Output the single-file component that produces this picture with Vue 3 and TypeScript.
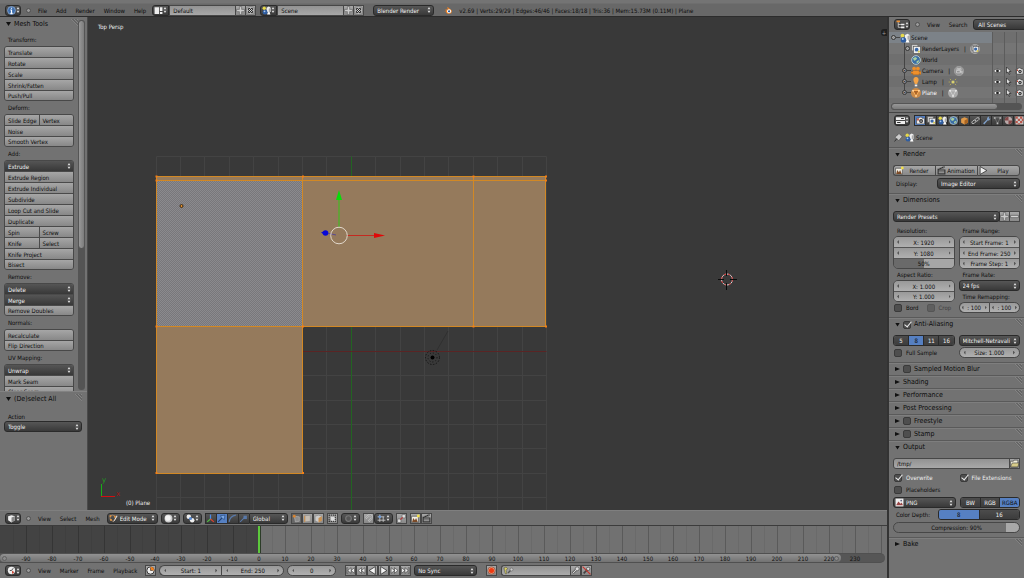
<script setup lang="ts">
import { ref } from 'vue'

interface Tool { label: string; menu?: boolean; half?: string }
interface ToolGroup { title: string; rows: Tool[] }

const toolGroups: ToolGroup[] = [
  { title: 'Transform:', rows: [{ label: 'Translate' }, { label: 'Rotate' }, { label: 'Scale' }, { label: 'Shrink/Fatten' }, { label: 'Push/Pull' }] },
  { title: 'Deform:', rows: [{ label: 'Slide Edge', half: 'Vertex' }, { label: 'Noise' }, { label: 'Smooth Vertex' }] },
  {
    title: 'Add:',
    rows: [
      { label: 'Extrude', menu: true }, { label: 'Extrude Region' }, { label: 'Extrude Individual' }, { label: 'Subdivide' },
      { label: 'Loop Cut and Slide' }, { label: 'Duplicate' }, { label: 'Spin', half: 'Screw' }, { label: 'Knife', half: 'Select' },
      { label: 'Knife Project' }, { label: 'Bisect' },
    ],
  },
  { title: 'Remove:', rows: [{ label: 'Delete', menu: true }, { label: 'Merge', menu: true }, { label: 'Remove Doubles' }] },
  { title: 'Normals:', rows: [{ label: 'Recalculate' }, { label: 'Flip Direction' }] },
  { title: 'UV Mapping:', rows: [{ label: 'Unwrap', menu: true }, { label: 'Mark Seam' }, { label: 'Clear Seam' }] },
]

const tree = [
  { name: 'RenderLayers', icon: 'layers', extra: 'layersdisc', expand: '-', restrict: false },
  { name: 'World', icon: 'world', extra: '', expand: '', restrict: false },
  { name: 'Camera', icon: 'camobj', extra: 'camdata', expand: '+', restrict: true },
  { name: 'Lamp', icon: 'lamp', extra: 'lampdata', expand: '+', restrict: true },
  { name: 'Plane', icon: 'mesh', extra: 'meshdata', expand: '+', restrict: true },
]

const tabs = ['camera', 'layers', 'scene', 'world', 'cube', 'chain', 'wrench', 'tri', 'material', 'texture']

const folded = ref([
  { title: 'Sampled Motion Blur', check: true },
  { title: 'Shading', check: false },
  { title: 'Performance', check: false },
  { title: 'Post Processing', check: false },
  { title: 'Freestyle', check: true },
  { title: 'Stamp', check: true },
])

const playback = ['first', 'prevkey', 'reverse', 'play', 'nextkey', 'last']

/* Ground grid: 16 cells round the world origin */
const CELL = 24.4
const GRID = 156.5
const gridSteps = Array.from({ length: 17 }, (_, i) => Math.floor(i * CELL) + GRID)
const gridEnd = gridSteps[16]
const axis = gridSteps[8]
const verts: [number, number][] = [
  [156.5, 177], [303, 177], [473.5, 177], [546, 177],
  [156.5, 181], [546, 181],
  [156.5, 327], [303, 327], [473.5, 327], [546, 327],
  [156.5, 473.5], [303, 473.5],
]

/* Timeline ruler */
const ZERO = 259
const frameX = (frame: number) => Math.round(ZERO + frame * 2.59)
const frames = Array.from({ length: 33 }, (_, i) => -90 + i * 10)
const ticks = Array.from({ length: 68 }, (_, i) => -95 + i * 5)
</script>

<template>
  <svg class="defs" aria-hidden="true">
    <symbol id="updown" viewBox="0 0 6 10"><path d="M3 0.5 5.2 4H0.8zM3 9.5 5.2 6H0.8z" fill="currentColor" /></symbol>
    <symbol id="plus" viewBox="0 0 16 16"><path d="M6 1h4v5h5v4h-5v5H6v-5H1V6h5z" fill="#ccc" stroke="#555" /></symbol>
    <symbol id="minus" viewBox="0 0 16 16"><path d="M1 6h14v4H1z" fill="#d4d4d4" stroke="#444" /></symbol>
    <symbol id="cross" viewBox="0 0 16 16"><rect x="1" y="1" width="14" height="14" rx="4" fill="#bbb" stroke="#666" /><path d="M4 4l8 8M12 4l-8 8" stroke="#222" stroke-width="3.600" /><path d="M5 5l6 6M11 5l-6 6" stroke="#ddd" stroke-width="1.600" /></symbol>
    <symbol id="info" viewBox="0 0 16 16"><circle cx="8" cy="8" r="7" fill="#3f6fae" stroke="#8aa8d0" stroke-width="1.500" /><path d="M8 3v2M8 6.5V13M6 13h4M6 7h2" stroke="#fff" stroke-width="2" /></symbol>
    <symbol id="screen" viewBox="0 0 16 16"><path d="M1 2h8v12H1zM10.500 2H15v7h-4.500zM10.500 10.500H15V14h-4.500z" fill="#eee" /></symbol>
    <symbol id="scene" viewBox="0 0 16 16"><circle cx="4" cy="4" r="3" fill="#e6d94a" /><path d="M8 3l4-2 3.500 2v7L12 12 8 10z" fill="#eee" /><path d="M12 5l3.500-2v7L12 12z" fill="#aaa" /><circle cx="5.500" cy="11" r="4.300" fill="#2f5da0" /><circle cx="4.500" cy="9.500" r="1.600" fill="#a8c8f0" /><path d="M10 12l3-2 2 5H9z" fill="#fff" /></symbol>
    <symbol id="blender" viewBox="0 0 16 16"><path d="M1 6h7L5 3l2-1 7 6-1 5-6 1-3-2L3 9 0 11l4-4z" fill="#f08020" /><circle cx="9" cy="9.500" r="3.600" fill="#fff" /><circle cx="9" cy="9.500" r="2" fill="#265a9c" /></symbol>
    <symbol id="outliner" viewBox="0 0 16 16"><path d="M1 1h6v3H1z" fill="#f09030" /><path d="M4 4v9h5M4 8h5" fill="none" stroke="#ddd" stroke-width="1.300" /><path d="M9 6.500h6v3H9zM9 11.500h6v3H9z" fill="#eee" /></symbol>
    <symbol id="props" viewBox="0 0 16 16"><path d="M0 2h16v5H0zM0 9h16v5H0z" fill="#eee" /><path d="M9 4.500h5M2 11.500h6" stroke="#333" stroke-width="2" /></symbol>
    <symbol id="cube3d" viewBox="0 0 16 16"><path d="M2 4l6-2 6 2v7l-6 4-6-4z" fill="#eee" /><path d="M8 6l6-2v7l-6 4z" fill="#888" /></symbol>
    <symbol id="clock" viewBox="0 0 16 16"><circle cx="8" cy="8" r="6.500" fill="#eee" /><path d="M8 8l3-4M8 8H5" stroke="#333" stroke-width="1.500" /><path d="M9 8l4 3-4 3z" fill="#c43" /></symbol>
    <symbol id="layers" viewBox="0 0 16 16"><rect x="1" y="1" width="10" height="10" fill="#ccc" stroke="#666" /><rect x="4" y="4" width="11" height="11" fill="#eee" stroke="#555" /><circle cx="9" cy="9" r="3" fill="#3a68a8" /><circle cx="12.500" cy="12" r="1.800" fill="#d8c850" /></symbol>
    <symbol id="layersdisc" viewBox="0 0 16 16"><circle cx="8" cy="8" r="8" fill="#aaa" /><rect x="3" y="2" width="8" height="8" fill="#ccc" stroke="#666" /><rect x="5" y="4" width="9" height="9" fill="#eee" stroke="#555" /><circle cx="9" cy="8" r="2.600" fill="#3a68a8" /><circle cx="12" cy="11" r="1.600" fill="#d8c850" /></symbol>
    <symbol id="world" viewBox="0 0 16 16"><circle cx="8" cy="8" r="7" fill="#3b6ea5" stroke="#cdd" stroke-width="1.200" /><path d="M3 5l4-2 3 2-2 3-3 1zM9 10l4-2-1 4-3 1z" fill="#a9cfa0" /></symbol>
    <symbol id="camobj" viewBox="0 0 16 16"><circle cx="5" cy="4" r="3" fill="#f0902a" /><circle cx="11" cy="4" r="3" fill="#f0902a" /><path d="M3 7h10v3l3-2v6l-3-2v2H3v-2H0V9h3z" fill="#f0902a" stroke="#a35a14" stroke-width=".6" /></symbol>
    <symbol id="camdata" viewBox="0 0 16 16"><circle cx="8" cy="8" r="7.500" fill="#949494" stroke="#aaa" /><path d="M4 7h6v4H4zM10 9l3-1v4z" fill="none" stroke="#ddd" /><circle cx="6" cy="5" r="1.500" fill="none" stroke="#ddd" /><circle cx="10" cy="5" r="1.500" fill="none" stroke="#ddd" /></symbol>
    <symbol id="lamp" viewBox="0 0 16 16"><path d="M8 0a4 4 0 0 1 4 5c0 3-2 3-2 6H6c0-3-2-3-2-6a4 4 0 0 1 4-5z" fill="#f3a347" /><path d="M6 12h4v3H6z" fill="#eee" /></symbol>
    <symbol id="lampdata" viewBox="0 0 16 16"><circle cx="8" cy="8" r="2.500" fill="#d8d070" /><path d="M3 3l2 2M13 3l-2 2M3 13l2-2M13 13l-2-2M1 8h2M13 8h2" stroke="#b5ad55" stroke-width="1.500" /></symbol>
    <symbol id="mesh" viewBox="0 0 16 16"><circle cx="8" cy="8" r="8" fill="#c98a48" /><path d="M3 4h10l-5 9z" fill="#a8652a" stroke="#ffb15a" stroke-width="1.500" /><path d="M2 3h2.500v2.500H2zM11.500 3H14v2.500h-2.500zM6.800 11.500h2.500V14H6.800z" fill="#ffd9a8" /></symbol>
    <symbol id="meshdata" viewBox="0 0 16 16"><circle cx="8" cy="8" r="8" fill="#aaa" /><path d="M3.500 4.500h9L8 12.500z" fill="none" stroke="#ddd" /><path d="M2 3h2.500v2.500H2zM11.500 3H14v2.500h-2.500zM6.800 11.500h2.500V14H6.800z" fill="#eee" /></symbol>
    <symbol id="eye" viewBox="0 0 16 16"><path d="M0 8q8-8 16 0q-8 7-16 0z" fill="#eee" stroke="#333" /><circle cx="8" cy="8" r="2.800" fill="#222" /></symbol>
    <symbol id="cursor" viewBox="0 0 16 16"><path d="M4 0v12l3-2 2 5 2-1-2-5h4z" fill="#ddd" stroke="#222" stroke-width="1.300" /></symbol>
    <symbol id="camera" viewBox="0 0 16 16"><path d="M1 4h4l1-2h4l1 2h4v10H1z" fill="#eee" stroke="#333" /><circle cx="9" cy="9" r="3.500" fill="#333" /><circle cx="9" cy="9" r="1.500" fill="#aaa" /><path d="M2 5h3v3H2z" fill="#c43" /></symbol>
    <symbol id="cube" viewBox="0 0 16 16"><path d="M2 5l6-3 6 3v7l-6 3-6-3z" fill="#e09a4a" /><path d="M8 8l6-3v7l-6 3z" fill="#a86422" /></symbol>
    <symbol id="chain" viewBox="0 0 16 16"><ellipse cx="5" cy="10.500" rx="4" ry="2.500" transform="rotate(-35 5 10.500)" fill="none" stroke="#bbb" stroke-width="1.500" /><ellipse cx="11" cy="6" rx="4" ry="2.500" transform="rotate(-35 11 6)" fill="none" stroke="#bbb" stroke-width="1.500" /></symbol>
    <symbol id="wrench" viewBox="0 0 16 16"><path d="M2 13l7-7a4 4 0 0 1 4-5l-1 3 2 1 1-1a4 4 0 0 1-5 4l-6 7z" fill="#7f9fc8" /></symbol>
    <symbol id="tri" viewBox="0 0 16 16"><path d="M3 3h10L8 13z" fill="none" stroke="#888" /><path d="M1.500 2h3v3h-3zM11.500 2h3v3h-3zM6.500 11.500h3v3h-3z" fill="#bbb" /></symbol>
    <symbol id="material" viewBox="0 0 16 16"><circle cx="8" cy="8" r="6.500" fill="#b9a9a9" /><path d="M8 8h6.500A6.500 6.500 0 0 1 8 14.500zM8 8H1.500A6.500 6.500 0 0 1 8 1.500z" fill="#834848" /></symbol>
    <symbol id="texture" viewBox="0 0 16 16"><path d="M1 1h14v14H1z" fill="#ccc" /><path d="M1 1h4v4H1zM9 1h4v4H9zM5 5h4v4H5zM1 9h4v4H1zM9 9h4v4H9zM12 5h3v4h-3zM5 13h4v2H5z" fill="#b8584c" /></symbol>
    <symbol id="pin" viewBox="0 0 16 16"><path d="M9 1l6 6-2 1-3 4-2 1-6-5 1-2 4-3z" fill="#ccc" stroke="#444" /><path d="M5 10l-4 5" stroke="#222" stroke-width="1.500" /></symbol>
    <symbol id="still" viewBox="0 0 16 16"><path d="M1 4h12v11H1z" fill="#f2efe6" stroke="#333" /><path d="M2 14l2-7 3 4 2-4 3 7z" fill="#7a4a28" /><circle cx="13" cy="3.500" r="2.500" fill="#f3e04a" /></symbol>
    <symbol id="clapper" viewBox="0 0 16 16"><path d="M1 5L13 0l1 3-9 3h10v9H1z" fill="#333" /><path d="M3 4l2 2M7 2.500l2 2M11 1l1.500 2M3 9h10M3 12h10" stroke="#ddd" stroke-width="1.300" /></symbol>
    <symbol id="playbig" viewBox="0 0 16 16"><path d="M2 1l12 7-12 7z" fill="#eee" stroke="#222" stroke-width="1.300" /></symbol>
    <symbol id="folder" viewBox="0 0 16 16"><path d="M1 4h5l1-2h7v12H1z" fill="#f4f0dc" stroke="#333" /><path d="M1 14l3-7h12l-2 7z" fill="#d8cc8a" stroke="#333" /></symbol>
    <symbol id="image" viewBox="0 0 16 16"><path d="M1 1h14v14H1z" fill="#eee" /><path d="M2 13l4-7 4 4 2-2 2 5z" fill="#944" /><circle cx="11" cy="4.500" r="1.500" fill="#557" /></symbol>
    <symbol id="edit" viewBox="0 0 16 16"><path d="M2 4l4-2 5 2v6l-4 3-5-3z" fill="none" stroke="#b99268" stroke-width="1.300" /><path d="M1 2h3v3H1zM9 3h3v3H9zM2 9h3v3H2z" fill="#e8963c" /><path d="M14 2l-5 9-2 3 3-2 5-8z" fill="#eee" /></symbol>
    <symbol id="solid" viewBox="0 0 16 16"><circle cx="8" cy="8" r="7" fill="#ccc" /><circle cx="7" cy="7" r="5" fill="#f4f4f4" /></symbol>
    <symbol id="pivot" viewBox="0 0 16 16"><circle cx="5" cy="5" r="4" fill="#eee" /><circle cx="11" cy="11" r="4" fill="#eee" /><circle cx="8" cy="8" r="2.800" fill="#5b8ad0" /></symbol>
    <symbol id="axes" viewBox="0 0 16 16"><path d="M8 9V1" stroke="#4a8be8" stroke-width="2.200" /><path d="M8 9l-6 5" stroke="#50c040" stroke-width="2.200" /><path d="M8 9l6 5" stroke="#e04030" stroke-width="2.200" /></symbol>
    <symbol id="move" viewBox="0 0 16 16"><path d="M2 14l7-7" stroke="#1d3f70" stroke-width="2" /><path d="M6 3l8-1-1 8-3-2-2-2z" fill="#7ca6e0" stroke="#1d3f70" /></symbol>
    <symbol id="arc" viewBox="0 0 16 16"><path d="M2 14C3 7 7 3 14 2" fill="none" stroke="#5878a8" stroke-width="2.200" /></symbol>
    <symbol id="scaleh" viewBox="0 0 16 16"><path d="M2 14l8-8" stroke="#5878a8" stroke-width="1.800" /><path d="M8 3h6v6H8z" fill="#5878a8" /></symbol>
    <symbol id="vert" viewBox="0 0 16 16"><path d="M4 4l9 1v8l-7 1z" fill="#8c8c8c" stroke="#bbb" /><circle cx="4" cy="4" r="2.500" fill="#d88430" /></symbol>
    <symbol id="edge" viewBox="0 0 16 16"><path d="M3 3l10-1v11l-10 1z" fill="#c4bdb4" stroke="#888" /><path d="M3 3v11" stroke="#c99050" stroke-width="2" /></symbol>
    <symbol id="face" viewBox="0 0 16 16"><path d="M2 4l6-2 6 2v8l-6 3-6-3z" fill="#ccc" stroke="#888" /><path d="M8 7l6-3v8l-6 3z" fill="#c99050" /></symbol>
    <symbol id="occlude" viewBox="0 0 16 16"><path d="M5 5h8v8H5z" fill="#ddd" /><path d="M2 2h11v11H2z" fill="none" stroke="#333" stroke-dasharray="2 1.500" stroke-width="2" /></symbol>
    <symbol id="ring" viewBox="0 0 16 16"><circle cx="8" cy="8" r="5" fill="#555" stroke="#777" stroke-width="2" /></symbol>
    <symbol id="magnet" viewBox="0 0 16 16"><path d="M3 8l5-5a3.500 3.500 0 0 1 5 5l-5 5" fill="none" stroke="#ccc" stroke-width="3" /><path d="M3 8l5-5a3.500 3.500 0 0 1 5 5l-5 5" fill="none" stroke="#666" /></symbol>
    <symbol id="snapgrid" viewBox="0 0 16 16"><path d="M5 1v13M11 5v9M1 5h12M1 11h14" stroke="#ccc" stroke-width="1.500" /><circle cx="5" cy="5" r="2.500" fill="#6d9ad8" /></symbol>
    <symbol id="link" viewBox="0 0 16 16"><path d="M9 1h6v6H9zM1 9h6v6H1z" fill="#ddd" stroke="#555" /><path d="M6 10l4-4" stroke="#b33" stroke-width="2" /></symbol>
    <symbol id="first" viewBox="0 0 16 16"><path d="M1 3h2v10H1zM9 3v10L3 8zM15 3v10L9 8z" fill="#eee" stroke="#333" /></symbol>
    <symbol id="prevkey" viewBox="0 0 16 16"><path d="M8 3v10L2 8zM14 3v10L8 8z" fill="#eee" stroke="#333" /></symbol>
    <symbol id="reverse" viewBox="0 0 16 16"><path d="M13 1v14L2 8z" fill="#f4f4f4" stroke="#222" stroke-width="1.300" /></symbol>
    <symbol id="play" viewBox="0 0 16 16"><path d="M3 1v14l11-7z" fill="#f4f4f4" stroke="#222" stroke-width="1.300" /></symbol>
    <symbol id="nextkey" viewBox="0 0 16 16"><path d="M2 3v10l6-5zM8 3v10l6-5z" fill="#eee" stroke="#333" /></symbol>
    <symbol id="last" viewBox="0 0 16 16"><path d="M1 3v10l6-5zM7 3v10l6-5zM13 3h2v10h-2z" fill="#eee" stroke="#333" /></symbol>
    <symbol id="preview" viewBox="0 0 16 16"><circle cx="8" cy="8" r="6.500" fill="#eee" stroke="#222" stroke-width="1.500" /><path d="M8 8V1.500A6.500 6.500 0 0 1 14.500 8z" fill="#f08020" /><path d="M8 3v5h4" fill="none" stroke="#222" /></symbol>
    <symbol id="record" viewBox="0 0 16 16"><circle cx="8" cy="8" r="6.500" fill="#e8a080" stroke="#804030" /><circle cx="8" cy="8" r="4.500" fill="#ee3a12" /></symbol>
    <symbol id="keyset" viewBox="0 0 24 16"><path d="M8 1l3 3-3 4 2 6-3 1-2-7-1-5z" fill="#d8cf62" stroke="#444" /><path d="M12 13l6-6" stroke="#555" stroke-width="3" /><circle cx="19" cy="6" r="3" fill="#ccc" stroke="#555" /></symbol>
    <symbol id="key" viewBox="0 0 16 16"><path d="M3 13l7-7" stroke="#333" stroke-width="4" /><circle cx="11" cy="5" r="3.500" fill="#ddd" stroke="#333" /><path d="M3 13l7-7" stroke="#ddd" stroke-width="2" /></symbol>
    <symbol id="keydel" viewBox="0 0 16 16"><path d="M3 13l7-7" stroke="#444" stroke-width="3" /><circle cx="11" cy="5" r="3" fill="#ddd" stroke="#333" /><path d="M1 1l14 14" stroke="#c8322a" stroke-width="2" /></symbol>
  </svg>

  <div class="app">
    <header class="bar info">
      <button class="editor" aria-label="Editor type: Info"><svg class="ic"><use href="#info" /></svg><svg class="ud"><use href="#updown" /></svg></button>
      <span class="dot"></span>
      <nav class="menus">
        <a href="#file">File</a><a href="#add">Add</a><a href="#render">Render</a><a href="#window">Window</a><a href="#help">Help</a>
      </nav>
      <div class="idblock layoutid">
        <button class="editor" aria-label="Screen layout"><svg class="ic"><use href="#screen" /></svg><svg class="ud"><use href="#updown" /></svg></button>
        <input class="field" aria-label="Layout name" value="Default" />
        <button class="sq" aria-label="Add layout"><svg class="ic"><use href="#plus" /></svg></button>
        <button class="sq" aria-label="Delete layout"><svg class="ic"><use href="#cross" /></svg></button>
      </div>
      <div class="idblock sceneid">
        <button class="editor" aria-label="Scene"><svg class="ic"><use href="#scene" /></svg><svg class="ud"><use href="#updown" /></svg></button>
        <input class="field" aria-label="Scene name" value="Scene" />
        <button class="sq" aria-label="Add scene"><svg class="ic"><use href="#plus" /></svg></button>
        <button class="sq" aria-label="Delete scene"><svg class="ic"><use href="#cross" /></svg></button>
      </div>
      <label class="drop engine"><select aria-label="Render engine"><option>Blender Render</option></select><svg class="ud"><use href="#updown" /></svg></label>
      <svg class="ic logo"><use href="#blender" /></svg>
      <span class="stats">v2.69 | Verts:29/29 | Edges:46/46 | Faces:18/18 | Tris:36 | Mem:15.73M (0.11M) | Plane</span>
    </header>

    <div class="work">
      <div class="left">
        <div class="view">
          <aside class="shelf">
            <div class="tools">
              <div class="toollist">
                <h2 class="phead"><span class="tri open"></span>Mesh Tools<span class="grip"></span></h2>
                <section v-for="g in toolGroups" :key="g.title">
                  <h3>{{ g.title }}</h3>
                  <div class="stack">
                    <div v-for="t in g.rows" :key="t.label" class="trow">
                      <button :class="['btn', { dark: t.menu }]">{{ t.label }}<svg v-if="t.menu" class="ud"><use href="#updown" /></svg></button>
                      <button v-if="t.half" class="btn second">{{ t.half }}</button>
                    </div>
                  </div>
                </section>
              </div>
              <div class="vscroll"><div class="vthumb"></div></div>
            </div>
            <div class="operator">
              <h2 class="phead"><span class="tri open"></span>(De)select All<span class="grip"></span></h2>
              <label class="oplabel" for="action">Action</label>
              <div class="drop"><select id="action"><option>Toggle</option></select><svg class="ud"><use href="#updown" /></svg></div>
            </div>
          </aside>

          <div class="canvas">
            <svg class="scene3d" width="1000" height="600" viewBox="88 17 1000 600">
              <defs>
                <pattern id="sel" width="2" height="2" patternUnits="userSpaceOnUse">
                  <rect width="2" height="2" fill="#78777b" /><rect width="1" height="1" fill="#8b8a8e" /><rect x="1" y="1" width="1" height="1" fill="#8b8a8e" />
                </pattern>
              </defs>
              <g stroke="#434343">
                <template v-for="p in gridSteps" :key="p">
                  <line :x1="p" :y1="GRID" :x2="p" :y2="gridEnd" />
                  <line :x1="GRID" :y1="p" :x2="gridEnd" :y2="p" />
                </template>
              </g>
              <path :d="`M${axis} ${GRID}V${gridEnd}`" stroke="#226422" />
              <path :d="`M${GRID} ${axis}H${gridEnd}`" stroke="#5a2424" />
              <path d="M156 177h390v150H303v147H156z" fill="#957a5c" />
              <rect x="157" y="181" width="146" height="146" fill="url(#sel)" />
              <path d="M156.500 176.500H545.500V326.500H302.500V473.500H156.500zM156.500 180.500H545.500M302.500 176.500v150M473.500 176.500v150M156.500 326.500H303" fill="none" stroke="#d28824" />
              <rect v-for="(v, i) in verts" :key="i" :x="v[0] - 1" :y="v[1] - 1.5" width="2" height="2" fill="#f57f17" />
              <circle cx="181.500" cy="206" r="1.500" fill="#e8902c" stroke="#3a2a14" />
              <g fill="none">
                <path d="M339 227v-29" stroke="#34c416" /><path d="M339 190l3 10h-6z" fill="#08dc08" />
                <path d="M347 235.500h28" stroke="#c42a20" /><path d="M385 235.500l-11 -2.500v5z" fill="#e00808" />
                <path d="M336 235l-9-2" stroke="#5a4a90" /><circle cx="325.500" cy="233" r="2.800" fill="#0808d8" /><path d="M321 232.500l4-1.500v4z" fill="#0808d8" />
                <circle cx="339" cy="235.500" r="8.300" stroke="#e2d8cc" />
              </g>
              <path d="M437 350l11-19" stroke="#303030" />
              <circle cx="432.500" cy="357.500" r="7" fill="none" stroke="#151515" stroke-dasharray="1.500 1.500" />
              <circle cx="432.500" cy="357.500" r="4.500" fill="none" stroke="#151515" stroke-dasharray="1 2" />
              <circle cx="432.500" cy="357.500" r="2" fill="#000" />
              <circle cx="727" cy="279.500" r="5.500" fill="none" stroke="#ddd" />
              <circle cx="727" cy="279.500" r="5.500" fill="none" stroke="#c22" stroke-dasharray="2.200 2.200" />
              <path d="M718 279.500h6M730 279.500h7M726.500 270v6M726.500 283v7" stroke="#0a0a0a" />
              <path d="M101.500 497v-13" stroke="#16b016" /><path d="M101 496.500h14" stroke="#d01010" />
              <text x="102" y="482" fill="#20a020">y</text><text x="116" y="496" fill="#a01818">x</text>
            </svg>
            <span class="vname">Top Persp</span>
            <span class="oname">(0) Plane</span>
            <button class="expander" aria-label="Show properties region">+</button>
          </div>
        </div>

        <div class="bar vhead">
          <button class="editor" aria-label="Editor type: 3D View"><svg class="ic"><use href="#cube3d" /></svg><svg class="ud"><use href="#updown" /></svg></button>
          <span class="dot"></span>
          <nav class="menus"><a href="#view">View</a><a href="#select">Select</a><a href="#mesh">Mesh</a></nav>
          <div class="drop mode"><svg class="ic"><use href="#edit" /></svg><select aria-label="Mode"><option>Edit Mode</option></select><svg class="ud"><use href="#updown" /></svg></div>
          <button class="editor wide" aria-label="Viewport shading"><svg class="ic"><use href="#solid" /></svg><svg class="ud"><use href="#updown" /></svg></button>
          <button class="editor wide" aria-label="Pivot point"><svg class="ic"><use href="#pivot" /></svg><svg class="ud"><use href="#updown" /></svg></button>
          <div class="seg">
            <button class="dk" aria-label="Manipulator"><svg class="ic"><use href="#axes" /></svg></button>
            <button class="dk on" aria-label="Translate"><svg class="ic"><use href="#move" /></svg></button>
            <button class="dk" aria-label="Rotate"><svg class="ic"><use href="#arc" /></svg></button>
            <button class="dk" aria-label="Scale"><svg class="ic"><use href="#scaleh" /></svg></button>
            <div class="drop orient"><select aria-label="Orientation"><option>Global</option></select><svg class="ud"><use href="#updown" /></svg></div>
          </div>
          <div class="seg">
            <button class="sq act" aria-label="Vertex select"><svg class="ic"><use href="#vert" /></svg></button>
            <button class="sq" aria-label="Edge select"><svg class="ic"><use href="#edge" /></svg></button>
            <button class="sq" aria-label="Face select"><svg class="ic"><use href="#face" /></svg></button>
          </div>
          <button class="sq" aria-label="Limit selection to visible"><svg class="ic"><use href="#occlude" /></svg></button>
          <button class="editor wide" aria-label="Proportional editing"><svg class="ic"><use href="#ring" /></svg><svg class="ud"><use href="#updown" /></svg></button>
          <div class="seg">
            <button class="sq" aria-label="Snap"><svg class="ic"><use href="#magnet" /></svg></button>
            <button class="editor wide" aria-label="Snap element"><svg class="ic"><use href="#snapgrid" /></svg><svg class="ud"><use href="#updown" /></svg></button>
          </div>
          <button class="sq" aria-label="Auto merge"><svg class="ic"><use href="#link" /></svg></button>
          <div class="seg">
            <button class="sq" aria-label="Render still"><svg class="ic"><use href="#still" /></svg></button>
            <button class="sq" aria-label="Render animation"><svg class="ic"><use href="#clapper" /></svg></button>
          </div>
        </div>

        <div class="timeline">
          <svg class="tracks" width="2000" height="27" shape-rendering="crispEdges">
            <rect width="2000" height="27" fill="#717171" /><rect width="261" height="27" fill="#434343" />
            <line v-for="t in ticks" :key="t" :x1="frameX(t) + 0.5" :x2="frameX(t) + 0.5" y1="0" y2="27" stroke="#000" :stroke-opacity="t % 10 ? 0.06 : 0.2" />
            <rect x="258" width="2" height="27" fill="#5cc83c" /><rect x="260" width="1" height="27" fill="#2c3c28" />
          </svg>
          <div class="ruler">
            <div class="visible"><span class="knob"></span><span class="knob"></span></div>
            <svg class="labels" width="1000" height="8">
              <text v-for="f in frames" :key="f" :x="frameX(f)" y="7" text-anchor="middle">{{ f }}</text>
            </svg>
          </div>
        </div>

        <div class="bar thead">
          <button class="editor" aria-label="Editor type: Timeline"><svg class="ic"><use href="#clock" /></svg><svg class="ud"><use href="#updown" /></svg></button>
          <span class="dot"></span>
          <nav class="menus"><a href="#tview">View</a><a href="#marker">Marker</a><a href="#frame">Frame</a><a href="#playback">Playback</a></nav>
          <button class="sq" aria-label="Use preview range"><svg class="ic"><use href="#preview" /></svg></button>
          <div class="seg range">
            <span class="num lcap"><input aria-label="Start frame" value="Start: 1" /></span>
            <span class="num rcap"><input aria-label="End frame" value="End: 250" /></span>
          </div>
          <span class="num cap cur"><input aria-label="Current frame" value="0" /></span>
          <div class="seg play">
            <button v-for="p in playback" :key="p" class="sq" :aria-label="p"><svg class="ic"><use :href="'#' + p" /></svg></button>
          </div>
          <label class="drop sync"><select aria-label="Sync"><option>No Sync</option></select><svg class="ud"><use href="#updown" /></svg></label>
          <button class="sq rec" aria-label="Auto keying"><svg class="ic"><use href="#record" /></svg></button>
          <div class="seg">
            <span class="keying"><svg class="kic"><use href="#keyset" /></svg><input aria-label="Active keying set" /></span>
            <button class="sq" aria-label="Insert keyframe"><svg class="ic"><use href="#key" /></svg></button>
            <button class="sq" aria-label="Delete keyframe"><svg class="ic"><use href="#keydel" /></svg></button>
          </div>
        </div>
      </div>

      <aside class="right">
        <div class="bar ohead">
          <button class="editor" aria-label="Editor type: Outliner"><svg class="ic"><use href="#outliner" /></svg><svg class="ud"><use href="#updown" /></svg></button>
          <span class="dot"></span>
          <nav class="menus"><a href="#oview">View</a><a href="#search">Search</a></nav>
          <button class="btn dark allscenes">All Scenes</button>
        </div>
        <ul class="tree">
          <li class="root"><span class="ex">-</span><svg class="ic"><use href="#scene" /></svg><span class="nm">Scene</span></li>
          <li v-for="n in tree" :key="n.name">
            <span :class="['ex', { none: !n.expand, child: n.restrict }]">{{ n.expand }}</span>
            <svg class="ic"><use :href="'#' + n.icon" /></svg>
            <span :class="['nm', { sel: n.name === 'Plane' }]">{{ n.name }}</span>
            <template v-if="n.extra"><span class="pipe">|</span><svg class="ic"><use :href="'#' + n.extra" /></svg></template>
            <span v-if="n.restrict" class="restrict">
              <svg class="ric"><use href="#eye" /></svg><svg class="ric"><use href="#cursor" /></svg><svg class="ric"><use href="#camera" /></svg>
            </span>
          </li>
        </ul>
        <div class="hscroll"><div class="hthumb"></div></div>

        <div class="bar phdr">
          <button class="editor" aria-label="Editor type: Properties"><svg class="ic"><use href="#props" /></svg><svg class="ud"><use href="#updown" /></svg></button>
          <div class="seg tabs">
            <button v-for="(t, i) in tabs" :key="t" :class="['dk', { on: i === 0 }]" :aria-label="t"><svg class="ic"><use :href="'#' + t" /></svg></button>
          </div>
        </div>
        <div class="crumb"><svg class="ic"><use href="#pin" /></svg><svg class="ic"><use href="#scene" /></svg><span>Scene</span></div>

        <section class="panel">
          <h2 class="phead"><span class="tri open"></span>Render<span class="grip"></span></h2>
          <div class="row renders">
            <button class="btn rb1"><svg class="ic"><use href="#still" /></svg><span>Render</span></button>
            <button class="btn rb2"><svg class="ic"><use href="#clapper" /></svg><span>Animation</span></button>
            <button class="btn rb3"><svg class="ic"><use href="#playbig" /></svg><span>Play</span></button>
          </div>
          <div class="row display"><label for="display">Display:</label><div class="drop"><select id="display"><option>Image Editor</option></select><svg class="ud"><use href="#updown" /></svg></div></div>
        </section>

        <section class="panel">
          <h2 class="phead"><span class="tri open"></span>Dimensions<span class="grip"></span></h2>
          <div class="row presets">
            <div class="drop"><select aria-label="Render presets"><option>Render Presets</option></select><svg class="ud"><use href="#updown" /></svg></div>
            <button class="sq" aria-label="Add preset"><svg class="ic"><use href="#plus" /></svg></button>
            <button class="sq" aria-label="Remove preset"><svg class="ic"><use href="#minus" /></svg></button>
          </div>
          <div class="cols">
            <div class="col">
              <span class="lab">Resolution:</span>
              <div class="nums">
                <span class="num"><input aria-label="Resolution X" value="X: 1920" /></span>
                <span class="num"><input aria-label="Resolution Y" value="Y: 1080" /></span>
                <span class="num pct"><input aria-label="Resolution percentage" value="50%" /></span>
              </div>
              <span class="lab">Aspect Ratio:</span>
              <div class="nums">
                <span class="num"><input aria-label="Aspect X" value="X: 1.000" /></span>
                <span class="num"><input aria-label="Aspect Y" value="Y: 1.000" /></span>
              </div>
              <div class="pair checks"><label class="chk"><input type="checkbox" />Bord</label><label class="chk off"><input type="checkbox" disabled />Crop</label></div>
            </div>
            <div class="col">
              <span class="lab">Frame Range:</span>
              <div class="nums">
                <span class="num"><input aria-label="Start" value="Start Frame: 1" /></span>
                <span class="num"><input aria-label="End" value="End Frame: 250" /></span>
                <span class="num"><input aria-label="Step" value="Frame Step: 1" /></span>
              </div>
              <label class="lab" for="fps">Frame Rate:</label>
              <div class="drop"><select id="fps"><option>24 fps</option></select><svg class="ud"><use href="#updown" /></svg></div>
              <span class="lab">Time Remapping:</span>
              <div class="pair">
                <span class="num lcap"><input aria-label="Remap old" value=": 100" /></span><span class="num rcap"><input aria-label="Remap new" value=": 100" /></span>
              </div>
            </div>
          </div>
        </section>

        <section class="panel">
          <h2 class="phead"><span class="tri open"></span><label class="chk"><input type="checkbox" checked />Anti-Aliasing</label><span class="grip"></span></h2>
          <div class="cols">
            <div class="col aa">
              <div class="choice"><button>5</button><button class="on">8</button><button>11</button><button>16</button></div>
              <label class="chk"><input type="checkbox" />Full Sample</label>
            </div>
            <div class="col aa">
              <div class="drop"><select aria-label="Filter"><option>Mitchell-Netravali</option></select><svg class="ud"><use href="#updown" /></svg></div>
              <span class="num cap"><input aria-label="Filter size" value="Size: 1.000" /></span>
            </div>
          </div>
        </section>

        <section v-for="f in folded" :key="f.title" class="panel folded">
          <h2 class="phead">
            <span class="tri"></span>
            <label v-if="f.check" class="chk"><input type="checkbox" />{{ f.title }}</label>
            <template v-else>{{ f.title }}</template>
            <span class="grip"></span>
          </h2>
        </section>

        <section class="panel output">
          <h2 class="phead"><span class="tri open"></span>Output<span class="grip"></span></h2>
          <div class="row path"><input class="field" aria-label="Output path" value="/tmp/" /><button class="sq" aria-label="Browse"><svg class="ic"><use href="#folder" /></svg></button></div>
          <div class="row two lit"><label class="chk"><input type="checkbox" checked />Overwrite</label><label class="chk"><input type="checkbox" checked />File Extensions</label></div>
          <div class="row"><label class="chk"><input type="checkbox" />Placeholders</label></div>
          <div class="cols fmt">
            <div class="drop"><svg class="ic"><use href="#image" /></svg><select aria-label="File format"><option>PNG</option></select><svg class="ud"><use href="#updown" /></svg></div>
            <div class="choice"><button>BW</button><button>RGB</button><button class="on">RGBA</button></div>
          </div>
          <div class="row depth"><span>Color Depth:</span><div class="choice"><button class="on">8</button><button>16</button></div></div>
          <div class="comp"><input aria-label="Compression" value="Compression: 90%" /></div>
        </section>

        <section class="panel folded"><h2 class="phead"><span class="tri"></span>Bake<span class="grip"></span></h2></section>
      </aside>
    </div>
  </div>
</template>

<style>
html, body { margin: 0; background: #727272; }
</style>

<style scoped>
.defs { position: absolute; width: 0; height: 0; }
.app, .app * { box-sizing: border-box; }
.app {
  height: 100vh; min-height: 578px; display: flex; flex-direction: column; overflow: hidden;
  background: #727272; color: #0c0c0c;
  font: 6px/11px "DejaVu Sans Condensed", "DejaVu Sans", sans-serif; font-stretch: condensed;
}
button, input, select { font: inherit; color: inherit; margin: 0; padding: 0; border: 0; background: none; min-width: 0; outline: 0; }
select { appearance: none; width: 100%; height: 9px; line-height: 9px; color: #f0f0f0; padding: 0 2px; }
h2, h3, ul { margin: 0; padding: 0; font-weight: normal; font-size: 6px; list-style: none; }
a { color: inherit; text-decoration: none; }
svg { flex: none; }

.ic { width: 9px; height: 9px; }
.ud { width: 4px; height: 8px; color: #ddd; }
.bar { display: flex; align-items: center; flex: none; height: 14px; padding-left: 5px; white-space: nowrap; }
.info { height: 17px; padding-top: 4px; border-bottom: 1px solid #2c2c2c; background: linear-gradient(#747474 3px, #686868 4px); }
.editor { display: flex; align-items: center; justify-content: space-between; width: 16px; height: 11px; padding: 0 1px; border: 1px solid #2b2b2b; border-radius: 3px; background: linear-gradient(#555, #3a3a3a); flex: none; }
.editor.wide { width: 19px; padding: 0 2px; }
.dot { width: 5px; height: 5px; margin: 0 7px 0 5px; border: 1px solid #505050; border-radius: 50%; background: #999; flex: none; }
.menus { display: flex; gap: 9px; }
.idblock { display: flex; }
.layoutid { margin-left: 6px; width: 104px; }
.sceneid { margin-left: 4px; width: 104px; }
.idblock .editor { border-radius: 3px 0 0 3px; width: 17px; }
.field { flex: 1; height: 11px; padding: 0 3px; border: 1px solid #474747; background: linear-gradient(#929292, #a8a8a8); }
.sq { display: flex; align-items: center; justify-content: center; flex: none; width: 11px; height: 11px; border: 1px solid #474747; margin-left: -1px; background: linear-gradient(#a8a8a8, #898989); }
.sq.act { background: #666; }
.drop { position: relative; display: flex; align-items: center; height: 11px; border: 1px solid #2a2a2a; border-radius: 3px; background: linear-gradient(#565656, #393939); padding: 0 2px 0 1px; }
.engine { width: 61px; margin-left: 9px; }
.logo { margin: 0 6px 0 10px; }
.stats { flex: 1; }

.work { flex: 1; display: flex; min-height: 0; }
.left { flex: 1; min-width: 0; display: flex; flex-direction: column; border-right: 2px solid #333; }
.view { flex: 1; min-height: 0; display: flex; }
.shelf { width: 88px; flex: none; display: flex; flex-direction: column; border-right: 1px solid #4a4a4a; }
.tools { display: flex; height: 375px; overflow: hidden; border-bottom: 1px solid #828282; }
.toollist { flex: 1; padding-left: 4px; }
.phead { display: flex; align-items: center; height: 14px; font-size: 7px; gap: 3px; padding-left: 3px; white-space: nowrap; }
.shelf .phead { padding-left: 2px; }
.toollist > .phead { margin-bottom: 2px; }
.tri { width: 5px; height: 4px; background: #111; clip-path: polygon(0 0, 100% 50%, 0 100%); flex: none; }
.tri.open { clip-path: polygon(0 0, 100% 0, 50% 100%); }
.grip { width: 8px; height: 8px; margin: 0 0 3px auto; clip-path: polygon(0 0, 100% 0, 100% 100%); background: repeating-linear-gradient(45deg, #858585 0 1px, #666 1px 2px); flex: none; }
h3 { height: 13px; line-height: 14px; padding-left: 4px; }
.stack { border: 1px solid #484848; border-radius: 3px; overflow: hidden; width: 70px; }
.trow { display: flex; height: 11px; border-bottom: 1px solid #4a4a4a; }
.trow:last-child { border-bottom: 0; height: 9px; }
.btn { display: flex; align-items: center; justify-content: space-between; flex: 1; text-align: left; padding: 0 2px 0 3px; background: linear-gradient(#a6a6a6, #888); white-space: nowrap; }
.btn.second { border-left: 1px solid #4a4a4a; }
.btn.dark { background: linear-gradient(#555, #383838); color: #f0f0f0; }
.vscroll { width: 7px; margin: 3px 2px 1px 0; border-radius: 4px; background: #545454; flex: none; }
.vthumb { height: 62%; border: 1px solid #555; border-radius: 4px; background: linear-gradient(90deg, #999, #7c7c7c); }
.operator { flex: 1; padding: 0 5px 0 4px; }
.oplabel { display: block; padding: 5px 0 0 4px; height: 15px; }

.canvas { position: relative; flex: 1; min-width: 0; overflow: hidden; background: #393939; color: #eee; }
.scene3d { display: block; }
.vname, .oname, .expander { position: absolute; }
.vname { left: 10px; top: 4px; }
.oname { left: 38px; bottom: 2px; }
.expander { right: 0; top: 12px; width: 6px; height: 7px; line-height: 6px; border-radius: 3px 0 0 3px; background: #1f1f1f; color: #999; }

.vhead { border-top: 1px solid #7f7f7f; gap: 3px; height: 15px; }
.vhead .dot { margin: 0 4px 0 2px; }
.vhead .menus { margin-right: 4px; }
.vhead .sq, .thead .sq { margin-left: 0; }
.mode { width: 51px; }
.seg { display: flex; }
.dk { display: flex; align-items: center; justify-content: center; width: 11px; height: 11px; background: linear-gradient(#555, #3b3b3b); border: 1px solid #2c2c2c; border-right-width: 0; }
.dk.on, .choice .on { background: #5680c2; color: #0c0c0c; }
.orient { width: 39px; border-radius: 0 3px 3px 0; }

.timeline { flex: none; height: 38px; overflow: hidden; border-top: 1px solid #3c3c3c; }
.tracks { display: block; }
.ruler { position: relative; height: 10px; margin-right: 2px; border: solid #505050; border-width: 1px 0; border-radius: 0 5px 5px 0; background: #565656; overflow: hidden; }
.visible { display: flex; align-items: center; justify-content: space-between; width: 95%; height: 8px; padding: 0 2px; border-radius: 5px; background: linear-gradient(#929292, #727272); }
.labels { position: absolute; left: 0; top: 0; }
.ruler text { fill: #101010; font: 6px "DejaVu Sans Condensed", "DejaVu Sans", sans-serif; font-stretch: condensed; }
.knob { width: 5px; height: 5px; border-radius: 50%; background: #8a8a8a; border: 1px solid #606060; }

.thead { height: 15px; gap: 0; }
.thead .menus { margin-right: 8px; }
.num { position: relative; display: flex; align-items: center; flex: 1; height: 11px; min-width: 0; background: linear-gradient(#999, #b0b0b0); border: 1px solid #474747; padding: 0 4px; }
.num::before, .num::after { content: ""; width: 2px; height: 4px; background: #555; flex: none; clip-path: polygon(100% 0, 100% 100%, 0 50%); }
.num::after { clip-path: polygon(0 0, 100% 50%, 0 100%); }
.num input, .comp input { width: 100%; height: 9px; text-align: center; }
.cap { border-radius: 6px; }
.lcap { border-radius: 6px 0 0 6px; border-right-width: 0; }
.rcap { border-radius: 0 6px 6px 0; }
.range { width: 125px; margin-left: 3px; }
.cur { flex: none; width: 49px; margin: 0 9px 0 3px; }
.sync { width: 63px; margin: 0 9px 0 3px; }
.rec { margin-right: 4px; }
.keying { display: flex; width: 69px; height: 11px; border: 1px solid #474747; border-right: 0; border-radius: 3px 0 0 3px; background: linear-gradient(#929292, #aaa); align-items: center; }
.keying input { flex: 1; height: 9px; }
.kic { width: 12px; height: 9px; }

.right { width: 135px; flex: none; display: flex; flex-direction: column; overflow: hidden; }
.ohead { height: 15px; overflow: hidden; }
.allscenes { flex: none; width: 60px; height: 11px; margin-left: 6px; border: 1px solid #2a2a2a; border-radius: 3px; padding-left: 4px; }
.tree { height: 71px; background: repeating-linear-gradient(#6f6f6f 0 11px, #757575 11px 22px); position: relative; }
.tree::before { content: ""; position: absolute; left: 15px; top: 11px; width: 1px; height: 50px; background: #444; }
.tree::after { content: ""; position: absolute; right: 0; top: 0; bottom: 0; width: 32px; background: repeating-linear-gradient(90deg, #5c5c5c 0 1px, transparent 1px 12px); }
.tree li { display: flex; align-items: center; height: 11px; padding-left: 16px; }
.tree .root { padding-left: 2px; background: linear-gradient(90deg, #7c8288 103px, transparent 103px); }
.tree .ic { width: 10px; height: 10px; }
.nm { margin-left: 1px; }
.nm.sel { color: #fff; }
.ex { position: relative; width: 5px; height: 5px; line-height: 3px; text-align: center; border: 1px solid #333; border-radius: 50%; background: #aaa; margin-right: 1px; font-size: 4px; flex: none; }
.root .ex { margin-right: 4px; }
.ex.child { margin: 0 4px 0 -3px; }
.ex.child::after, .root .ex::after { content: ""; position: absolute; left: 4px; top: 1px; width: 4px; height: 1px; background: #444; }
.ex.none { visibility: hidden; }
.pipe { margin: 0 4px 0 5px; }
.restrict { display: flex; gap: 2px; margin-left: auto; }
.ric { width: 9px; height: 8px; }
.hscroll { height: 7px; margin: 0 2px 2px 2px; border-radius: 4px; background: #545454; flex: none; }
.hthumb { width: 82%; height: 7px; border: 1px solid #555; border-radius: 4px; background: linear-gradient(#989898, #7a7a7a); }
.phdr { height: 15px; border-top: 1px solid #444; }
.tabs { margin-left: 4px; flex: 1; overflow: hidden; }
.tabs .dk { flex: none; }
.crumb { display: flex; align-items: center; gap: 2px; height: 20px; padding: 0 5px; flex: none; }

.panel { flex: none; padding: 0 4px 4px; border-top: 1px solid #5a5a5a; box-shadow: inset 0 1px #7e7e7e; }
.panel .phead { height: 13px; margin-right: -2px; }
.folded { padding-bottom: 0; }
.panel .phead .tri { margin-left: -1px; }
.folded .phead { height: 12px; }
.row { display: flex; align-items: center; height: 11px; margin-top: 2px; }
.phead + .row, .phead + .cols { margin-top: 4px; }
.renders .btn { height: 11px; border: 1px solid #474747; border-right: 0; padding: 0 1px; }
.renders .btn span { flex: 1; text-align: center; }
.rb1 { border-radius: 3px 0 0 3px; }
.renders .rb3 { border-right: 1px solid #474747; border-radius: 0 3px 3px 0; }
.display label { width: 44px; padding-left: 3px; flex: none; }
.display .drop, .presets .drop { flex: 1; }
.cols { display: flex; gap: 4px; }
.col { flex: 1; display: flex; flex-direction: column; min-width: 0; }
.presets + .cols { margin-top: 3px; }
.lab { height: 11px; padding-left: 4px; white-space: nowrap; }
.nums { border: 1px solid #474747; border-radius: 5px; overflow: hidden; }
.nums .num { border: 0; border-bottom: 1px solid #555; height: 11px; flex: none; padding: 0 3px; }
.nums .num:last-child { border-bottom: 0; height: 9px; }
.nums .pct { background: linear-gradient(90deg, #6a6a6a 50%, #a6a6a6 50%); }
.nums .pct::before, .nums .pct::after { visibility: hidden; }
.pair { display: flex; }
.pair .num { padding: 0 2px; }
.checks { gap: 7px; }
.chk { display: flex; align-items: center; gap: 4px; height: 11px; white-space: nowrap; }
.chk input { appearance: none; width: 8px; height: 8px; border: 1px solid #3a3a3a; border-radius: 2px; background: #4e4e4e; flex: none; position: relative; margin-left: 1px; }
.chk input:checked::after { content: ""; position: absolute; left: 2px; top: -2px; width: 3px; height: 6px; border: solid #f0f0f0; border-width: 0 1px 1px 0; transform: rotate(40deg); }
.off { opacity: .5; }
.phead .chk { gap: 3px; margin-left: -1px; }
.aa { gap: 1px; }
.choice { display: flex; height: 11px; border: 1px solid #2a2a2a; border-radius: 3px; overflow: hidden; flex: 1 0 auto; }
.choice button { flex: 1; background: linear-gradient(#4c4c4c, #3c3c3c); color: #f0f0f0; text-align: center; line-height: 9px; }
.choice button + button { border-left: 1px solid #2a2a2a; }
.choice .on { background: #5680c2; color: #0c0c0c; }
.path .field { border-radius: 3px 0 0 3px; }
.output .row { margin-top: 1px; }
.output .path { margin-top: 4px; }
.output .two { margin-top: 3px; gap: 4px; }
.two .chk { flex: 1; }
.lit { color: #f0f0f0; }
.fmt { margin-top: 2px; }
.fmt > * { flex: 1 1 0; }
.fmt .choice { flex: 1 1 0; }
.depth span { width: 45px; padding-left: 3px; flex: none; }
.comp { height: 11px; margin-top: 2px; border: 1px solid #474747; border-radius: 6px; background: linear-gradient(90deg, #707070 90%, #a8a8a8 90%); overflow: hidden; }
.comp input { display: block; }
.scene3d text { font: 7px "DejaVu Sans", sans-serif; }
</style>
